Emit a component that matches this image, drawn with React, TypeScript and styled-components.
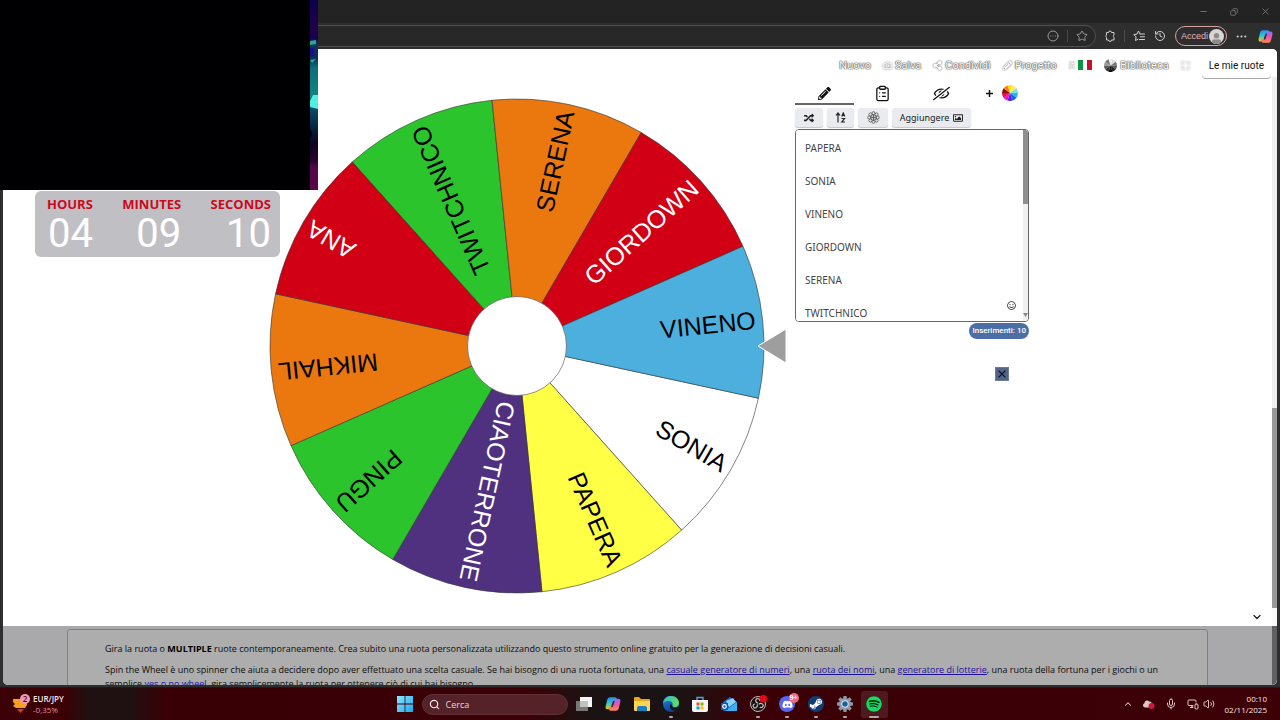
import React from 'react';
import styled, { createGlobalStyle } from 'styled-components';
import {
  FaPencilAlt, FaRegEyeSlash, FaRandom, FaRegImage, FaRegSmile, FaShareAlt,
  FaSpotify, FaDiscord, FaSteamSymbol, FaUser, FaCloud,
} from 'react-icons/fa';
import {
  Star, History, Search, Mic, Volume2, ChevronUp, ChevronDown, X, Minus,
  Copy, Ellipsis, CircleEllipsis, Camera, Maximize, ClipboardList, MonitorSmartphone,
} from 'lucide-react';

const Global = createGlobalStyle`
  *, *::before, *::after { box-sizing: border-box; }
  body { margin: 0; background: #000; font-family: Roboto, "Liberation Sans", sans-serif; }
  button { font: inherit; color: inherit; background: none; border: 0; padding: 0; margin: 0; }
  svg { display: block; flex: none; }
  p { margin: 0; }
`;

const Desktop = styled.div`
  position: relative;
  display: flex;
  flex-direction: column;
  height: 100vh;
  overflow: hidden;
`;

/* Browser window */
const BrowserWindow = styled.section`
  flex: 1;
  min-height: 0;
  display: flex;
  flex-direction: column;
  background: #2e2e2e;
  border-bottom: 1px solid #1c1c1c;
`;
const TitleBar = styled.header`
  display: flex;
  justify-content: flex-end;
  align-items: center;
  gap: 19px;
  height: 23px;
  padding-right: 9px;
  background: #232323;
  color: #8c8c8c;
`;
const IconButton = styled.button<{ $w?: number }>`
  display: inline-flex;
  align-items: center;
  justify-content: center;
  width: ${p => p.$w ?? 12}px;
`;
const Toolbar = styled.div`
  display: flex;
  align-items: center;
  height: 26px;
  padding-right: 4px;
  color: #d0d0d0;
`;
const AddressBar = styled.div`
  flex: 1;
  display: flex;
  align-items: center;
  justify-content: flex-end;
  gap: 8px;
  height: 22px;
  padding-right: 7px;
  margin-right: 8px;
  background: #282828;
  border: 1px solid #505050;
  border-radius: 11px;
  color: #9a9a9a;
`;
const AddressInput = styled.input`
  flex: 1;
  min-width: 0;
  border: 0;
  outline: 0;
  background: transparent;
  color: inherit;
`;
const Divider = styled.span`
  width: 1px;
  height: 12px;
  background: #4a4a4a;
`;
const ToolGroup = styled.div`
  display: flex;
  align-items: center;
  gap: 8px;
`;
const SignIn = styled.button`
  display: flex;
  align-items: center;
  justify-content: space-between;
  width: 52px;
  height: 20px;
  padding: 0 2px 0 5px;
  border: 1px solid #d5a2a4;
  border-radius: 10px;
  color: #f0b4b8;
  font: 9px "Liberation Sans", Arial, sans-serif;
`;
const Avatar = styled.span`
  display: flex;
  align-items: flex-end;
  justify-content: center;
  width: 15px;
  height: 15px;
  border-radius: 50%;
  overflow: hidden;
  background: #d8d6d4;
  color: #8d8b89;
`;

/* Page shown in the browser */
const Page = styled.div`
  flex: 1;
  min-height: 0;
  display: flex;
  margin: 0 3px 2px;
  border-radius: 0 5px 5px 5px;
  overflow: hidden;
  background: #fff;
`;
const Content = styled.div`
  flex: 1;
  min-width: 0;
  display: flex;
  flex-direction: column;
`;
const Nav = styled.nav`
  display: flex;
  align-items: center;
  justify-content: flex-end;
  gap: 12px;
  height: 34px;
  padding: 0 1px 2px 0;
  font-size: 11px;
`;
const NavItem = styled.a`
  display: flex;
  align-items: center;
  gap: 3px;
  color: #fff;
  text-decoration: none;
  text-shadow: 0 0 1px #444, 0 0 1px #444, 0 0 2px #777;
`;
const NavIcon = styled.span`
  svg { filter: drop-shadow(0 0 1px #444); }
`;
const Faded = styled.span`
  opacity: 0.5;
`;
const MyWheels = styled.button`
  height: 25px;
  padding: 0 7px;
  border-radius: 4px;
  color: #111;
  font-size: 10px;
  box-shadow: 0 1px 0 #aaa;
  background: #fff;
`;
const Main = styled.main`
  flex: 1;
  min-height: 0;
  display: flex;
  justify-content: center;
  gap: 8px;
  padding-left: 23px;
`;
const WheelArea = styled.div`
  width: 518px;
  padding-top: 15px;
  svg { width: 100%; height: auto; }
`;
const Panel = styled.aside`
  width: 234px;
  display: flex;
  flex-direction: column;
`;
const Tabs = styled.div`
  display: grid;
  grid-template-columns: repeat(4, 1fr);
  height: 22px;
`;
const Tab = styled.button<{ $active?: boolean }>`
  display: flex;
  align-items: center;
  justify-content: center;
  gap: 9px;
  color: #111;
  border-bottom: 2px solid ${p => (p.$active ? '#666' : 'transparent')};
`;
const AddTab = styled(Tab)`
  padding-left: 4px;
`;
const FlippedEye = styled(FaRegEyeSlash)`
  transform: scaleX(-1);
`;
const Tools = styled.div`
  display: flex;
  gap: 4px;
  padding: 3px 0 2px;
`;
const ToolButton = styled.button<{ $w: number }>`
  display: flex;
  align-items: center;
  justify-content: center;
  gap: 4px;
  width: ${p => p.$w}px;
  height: 19px;
  border-radius: 3px;
  background: #e9ebee;
  color: #222;
  font: 9px "Noto Sans", sans-serif;
  box-shadow: 0 1px 1px #c4c6c9;
`;
const EntryBox = styled.div`
  position: relative;
  display: flex;
  height: 193px;
  border: 1px solid #666;
  border-radius: 4px;
  overflow: hidden;
`;
const Entries = styled.textarea`
  flex: 1;
  min-width: 0;
  padding: 2px 9px;
  border: 0;
  outline: 0;
  resize: none;
  overflow: hidden;
  background: #fff;
  color: #444;
  font: 10px/33px "Noto Sans", sans-serif;
`;
const EntryScroll = styled.div`
  display: flex;
  flex-direction: column;
  justify-content: space-between;
  align-items: center;
  width: 5px;
  background: #f0f0f0;
  color: #888;
`;
const EntryThumb = styled.div`
  width: 5px;
  height: 74px;
  background: #8f8f8f;
`;
const Emoji = styled.button`
  position: absolute;
  right: 12px;
  bottom: 11px;
  color: #333;
`;
const Count = styled.output`
  align-self: flex-end;
  height: 16px;
  margin-top: 1px;
  padding: 0 3px;
  border-radius: 8px;
  background: #4a6ea5;
  color: #fff;
  font: 500 8px/16px Roboto, sans-serif;
`;
const Dismiss = styled.button`
  align-self: flex-end;
  display: flex;
  align-items: center;
  justify-content: center;
  width: 14px;
  height: 14px;
  margin: 28px 20px 0 0;
  border: 1px solid #6d7d98;
  background: #52648a;
  color: #0b1220;
`;
const Expand = styled.button`
  align-self: flex-end;
  margin: 0 9px 3px 0;
  color: #222;
`;
const Footer = styled.footer`
  height: 59px;
  padding: 3px 64px 0;
  overflow: hidden;
  background: #a9a9ab;
`;
const Card = styled.article`
  display: flex;
  flex-direction: column;
  gap: 7px;
  height: 90px;
  padding: 12px 38px 12px 37px;
  border: 1px solid #808080;
  border-radius: 3px;
  background: #adadad;
  color: #0c0c0c;
  font: 9px/14px "Open Sans", Roboto, sans-serif;
  a { color: #1c129c; }
`;
const Strong = styled.b`
  color: #000;
`;
const PageScroll = styled.div`
  display: flex;
  flex-direction: column;
  width: 5px;
  background: #fafafa;
`;
const Segment = styled.div<{ $color: string; $size: string }>`
  flex: ${p => p.$size};
  background: ${p => p.$color};
`;

/* Stream overlays */
const Webcam = styled.div`
  position: absolute;
  top: 0;
  left: 0;
  display: flex;
  justify-content: flex-end;
  width: 318px;
  height: 190px;
  background: #000003;
`;
const Timer = styled.div`
  position: absolute;
  top: 191px;
  left: 35px;
  display: flex;
  justify-content: space-between;
  width: 245px;
  height: 66px;
  padding: 5px 9px 0 12px;
  border-radius: 6px;
  background: #c0c0c4;
`;
const Unit = styled.div`
  text-align: right;
  color: #fff;
  font: 400 40px/44px Roboto, sans-serif;
`;
const UnitLabel = styled.div`
  color: #cc0a1c;
  font: 700 13px/16px "Open Sans", sans-serif;
`;

/* Taskbar */
const Taskbar = styled.footer`
  display: grid;
  grid-template-columns: 1fr auto 1fr;
  align-items: center;
  height: 32px;
  padding: 0 13px 0 12px;
  background: linear-gradient(90deg, #3c0006 0, #3a0006 5%, #1f1112 7%, #1f1112 10%, #380005 13%, #3a0006 41%, #1b1313 46%, #1b1313 53%, #3a0006 59%, #3c0006 100%);
  color: #f2e8e8;
  font-family: "Open Sans", sans-serif;
`;
const Widget = styled.button`
  display: flex;
  align-items: center;
  gap: 2px;
  text-align: left;
  font: 600 8px/11px "Open Sans", sans-serif;
`;
const Loss = styled.div`
  color: #e98f98;
  font-weight: 400;
`;
const Apps = styled.div`
  display: flex;
  align-items: center;
`;
const AppButton = styled.button<{ $active?: boolean; $dot?: boolean }>`
  position: relative;
  display: flex;
  align-items: center;
  justify-content: center;
  width: 27px;
  height: 27px;
  margin: 0 1px;
  border-radius: 3px;
  background: ${p => (p.$active ? 'rgba(255,255,255,0.1)' : 'transparent')};
  &::after {
    content: '';
    display: ${p => (p.$dot || p.$active ? 'block' : 'none')};
    position: absolute;
    bottom: 0;
    width: ${p => (p.$active ? 10 : 4)}px;
    height: 2px;
    border-radius: 1px;
    background: #b9a5a7;
  }
`;
const SearchBox = styled.label`
  display: flex;
  align-items: center;
  gap: 6px;
  width: 146px;
  height: 21px;
  margin: 0 2px;
  padding-left: 6px;
  border: 1px solid #613037;
  border-radius: 11px;
  background: #55222a;
`;
const SearchInput = styled.input`
  width: 100px;
  border: 0;
  outline: 0;
  padding: 0;
  background: transparent;
  font: 9px "Open Sans", sans-serif;
  &::placeholder { color: #e6d6d8; opacity: 1; }
`;
const Round = styled.span<{ $bg: string; $fg: string }>`
  display: flex;
  align-items: center;
  justify-content: center;
  width: 16px;
  height: 16px;
  border-radius: 50%;
  background: ${p => p.$bg};
  color: ${p => p.$fg};
`;
const Badge = styled.span`
  position: absolute;
  top: 2px;
  right: 2px;
  width: 10px;
  height: 10px;
  border-radius: 50%;
  background: #f0697c;
  color: #fff;
  font: 700 7px/10px "Open Sans", sans-serif;
  text-align: center;
`;
const Tray = styled.div`
  display: flex;
  align-items: center;
  justify-content: flex-end;
  gap: 10px;
  color: #dcc8ca;
`;
const TrayPair = styled.div`
  display: flex;
  gap: 4px;
`;
const Clock = styled.time`
  text-align: right;
  color: #f2e8e8;
  font: 8px/11px "Open Sans", sans-serif;
`;

const slices = [
  { name: 'SONIA', fill: '#ffffff', ink: '#000' },
  { name: 'PAPERA', fill: '#ffff45', ink: '#000' },
  { name: 'CIAOTERRONE', fill: '#50317f', ink: '#fff' },
  { name: 'PINGU', fill: '#2bc42d', ink: '#000' },
  { name: 'MIKHAIL', fill: '#eb780e', ink: '#000' },
  { name: 'ANA', fill: '#d20015', ink: '#fff' },
  { name: 'TWITCHNICO', fill: '#2bc42d', ink: '#000' },
  { name: 'SERENA', fill: '#eb780e', ink: '#000' },
  { name: 'GIORDOWN', fill: '#d20015', ink: '#fff' },
  { name: 'VINENO', fill: '#4dafdd', ink: '#000' },
];
const START = 12.2;
const STEP = 360 / slices.length;
const R = 247;
const point = (deg: number, r: number) => {
  const a = (deg * Math.PI) / 180;
  return `${(r * Math.cos(a)).toFixed(2)} ${(r * Math.sin(a)).toFixed(2)}`;
};

const Wheel = () => (
  <svg viewBox="-248 -248 518 496" role="img" aria-label="Ruota">
    {slices.map((s, i) => {
      const a = START + i * STEP;
      return (
        <path
          key={s.name}
          d={`M0 0L${point(a, R)}A${R} ${R} 0 0 1 ${point(a + STEP, R)}Z`}
          fill={s.fill}
          stroke="#333"
          strokeWidth="0.6"
        />
      );
    })}
    {slices.map((s, i) => (
      <text
        key={s.name}
        x="240"
        y="7"
        textAnchor="end"
        fontFamily="Liberation Sans, Arial, sans-serif"
        fontSize="25"
        fill={s.ink}
        transform={`rotate(${START + (i + 0.5) * STEP})`}
      >
        {s.name}
      </text>
    ))}
    <circle r="49.5" fill="#fff" stroke="#444" strokeWidth="0.6" />
    <path d="M241 0L269 -17V17Z" fill="#9e9e9e" stroke="#fff" strokeWidth="1" />
  </svg>
);

const spectrum = ['#ffe600', '#ffe96b', '#7be0e8', '#22b8f0', '#1a5df0', '#5a1fe0', '#e815c8', '#e8103a', '#8c0d12', '#ff7a1a'];
const greys = ['#eee', '#ddd', '#777', '#555', '#222', '#111', '#333', '#555', '#999', '#777'];
const MiniWheel = ({ size, colors }: { size: number; colors: string[] }) => (
  <svg width={size} height={size} viewBox="-10 -10 20 20">
    {colors.map((c, i) => (
      <path key={i} d={`M0 0L${point(i * 36 - 108, 10)}A10 10 0 0 1 ${point(i * 36 - 72, 10)}Z`} fill={c} />
    ))}
  </svg>
);

const Copilot = ({ size, id }: { size: number; id: string }) => (
  <svg width={size} height={size} viewBox="0 0 24 24">
    <defs>
      <linearGradient id={`${id}a`} x1="0" y1="0" x2="0" y2="1">
        <stop offset="0" stopColor="#2a8cf5" />
        <stop offset="0.5" stopColor="#33c6c4" />
        <stop offset="1" stopColor="#f5c518" />
      </linearGradient>
      <linearGradient id={`${id}b`} x1="0" y1="0" x2="0" y2="1">
        <stop offset="0" stopColor="#8f6cf5" />
        <stop offset="0.5" stopColor="#ec55a8" />
        <stop offset="1" stopColor="#ff8a4c" />
      </linearGradient>
    </defs>
    <path d="M8 2h7c2 0 2.500 1 3 3l.5 2h-3c-2 0-3 1-3.500 3l-2 7c-.5 2-1.500 3-3.500 3H4c-3 0-3.500-2-3-5l2-8c1-4 2-5 5-5z" fill={`url(#${id}a)`} />
    <path d="M16 22H9c-2 0-2.500-1-3-3l-.5-2h3c2 0 3-1 3.500-3l2-7c.5-2 1.500-3 3.500-3H20c3 0 3.500 2 3 5l-2 8c-1 4-2 5-5 5z" fill={`url(#${id}b)`} />
    <path d="M14.500 7l-2 7c-.5 2-1.500 3-3.500 3l.8-3.500 1.700-4.500c.5-1.400 1.500-2 3-2z" fill="#3a2140" />
  </svg>
);

const PuzzlePiece = () => (
  <svg width="12" height="12" viewBox="0 0 24 24" fill="none" stroke="currentColor" strokeWidth="2" strokeLinejoin="round">
    <path d="M5 5h4a3 3 0 0 1 6 0h5v5a3 3 0 0 0 0 5v5h-5a3 3 0 0 1-6 0H5v-5a3 3 0 0 1 0-5Z" />
  </svg>
);

const StarList = () => (
  <svg width="12" height="12" viewBox="0 0 24 24" fill="none" stroke="currentColor" strokeWidth="2" strokeLinecap="round" strokeLinejoin="round">
    <path d="M14 8l-3-6-3 6.200-6.500 1 4.700 4.700L5 21l5-2.600M14 8h9M15 13.500h8M13 19h10" />
  </svg>
);

const SortIcon = () => (
  <svg width="11" height="11" viewBox="0 0 22 22" fill="none" stroke="currentColor" strokeWidth="2.400">
    <path d="M6 21V3M2 7l4-5 4 5M13.500 9l3-7 3 7M14.500 7h4M13 13h6l-5.500 7H20" />
  </svg>
);

const FlowerGear = () => (
  <svg width="13" height="13" viewBox="-12 -12 24 24" fill="none" stroke="#555" strokeWidth="1.500">
    {Array.from({ length: 8 }, (_, i) => (
      <circle key={i} cx="0" cy="-8" r="2.800" transform={`rotate(${i * 45})`} />
    ))}
    <circle r="5" />
    <circle r="1.500" />
    <path d="M0-5V5M-5 0H5" />
  </svg>
);

const WebcamStrip = () => (
  <svg width="8" height="190" viewBox="0 0 8 190">
    <defs>
      <linearGradient id="strip" x1="0" y1="0" x2="0" y2="1">
        <stop offset="0" stopColor="#0c0050" />
        <stop offset="0.16" stopColor="#22004a" />
        <stop offset="0.2" stopColor="#150050" />
        <stop offset="0.23" stopColor="#0c3560" />
        <stop offset="0.3" stopColor="#0b2a5c" />
        <stop offset="0.36" stopColor="#0a6f7a" />
        <stop offset="0.5" stopColor="#0f8285" />
        <stop offset="0.58" stopColor="#0b4668" />
        <stop offset="0.68" stopColor="#08203c" />
        <stop offset="0.75" stopColor="#0c0620" />
        <stop offset="0.84" stopColor="#22042c" />
        <stop offset="0.88" stopColor="#52064a" />
        <stop offset="1" stopColor="#5c0648" />
      </linearGradient>
    </defs>
    <path d="M0 0H8V190H0Z" fill="url(#strip)" />
    <path d="M0 41L6 40V44L0 45ZM0 60L6 59 2 63Z" fill="#2aa88c" />
    <path d="M0 48H4V56H0Z" fill="#1c0c8c" />
    <path d="M0 101L3 95H8V109L0 107Z" fill="#4ff0e4" />
    <path d="M0 129L2 132V136L0 138Z" fill="#020208" />
  </svg>
);

const WinLogo = () => (
  <svg width="16" height="16" viewBox="0 0 16 16">
    <defs>
      <linearGradient id="win" x1="0" y1="0" x2="1" y2="1">
        <stop offset="0" stopColor="#8be6ff" />
        <stop offset="1" stopColor="#1ea7ee" />
      </linearGradient>
    </defs>
    <path d="M0 0H7.600V7.600H0ZM8.400 0H16V7.600H8.400ZM0 8.400H7.600V16H0ZM8.400 8.400H16V16H8.400Z" fill="url(#win)" />
  </svg>
);
const TaskView = () => (
  <svg width="16" height="16" viewBox="0 0 16 16">
    <path d="M0 5H12V15H0Z" fill="#777" />
    <path d="M4 1H16V11H4Z" fill="#f4f4f4" />
    <path d="M4 5H12V11H4Z" fill="#c2c2c2" />
  </svg>
);
const Folder = () => (
  <svg width="16" height="16" viewBox="0 0 16 16">
    <path d="M0 2q0-1 1-1h4l2 2h8q1 0 1 1v10H0Z" fill="#e8a81e" />
    <path d="M0 5H16V14q0 1-1 1H1q-1 0-1-1Z" fill="#ffd551" />
    <path d="M3 15v-3q0-2 2-2h6q2 0 2 2v3Z" fill="#1b7fc4" />
  </svg>
);
const Edge = () => (
  <svg width="16" height="16" viewBox="0 0 24 24">
    <defs>
      <linearGradient id="edgeA" x1="0" y1="0" x2="1" y2="0.300">
        <stop offset="0" stopColor="#2bb5ee" />
        <stop offset="1" stopColor="#63dc5a" />
      </linearGradient>
      <linearGradient id="edgeB" x1="0" y1="0" x2="0.500" y2="1">
        <stop offset="0" stopColor="#1c8ee0" />
        <stop offset="1" stopColor="#0c3f94" />
      </linearGradient>
    </defs>
    <circle cx="12" cy="12" r="12" fill="url(#edgeB)" />
    <path d="M0 12C0 5 5 0 12 0c7 0 12 5 12 10.500 0 4-3 6-6 6-3.500 0-4.500-1.500-4-2.500 1-1 1-5-3.500-6C6 7 1 8 0 12Z" fill="url(#edgeA)" />
    <path d="M14 14c-1 1.500.5 4.500 5 4 2-.2 3-1 4-1.500-1 2.500-3 4.500-5 5.500-6 0-9-5-7-9 1-1 3 0 3 1Z" fill="#1a1313" />
  </svg>
);
const Store = () => (
  <svg width="16" height="16" viewBox="0 0 16 16">
    <path d="M5 4V1.500h6V4" fill="none" stroke="#49a7e6" strokeWidth="1.400" />
    <path d="M0 4H16V14q0 2-2 2H2q-2 0-2-2Z" fill="#f5f5f5" />
    <path d="M4.500 6.500h3v3h-3z" fill="#f25022" />
    <path d="M8.500 6.500h3v3h-3z" fill="#7fba00" />
    <path d="M4.500 10.500h3v3h-3z" fill="#00a4ef" />
    <path d="M8.500 10.500h3v3h-3z" fill="#ffb900" />
  </svg>
);
const Outlook = () => (
  <svg width="16" height="16" viewBox="0 0 16 16">
    <path d="M2 6L9 1l7 5v8q0 1-1 1H3q-1 0-1-1Z" fill="#1468c7" />
    <path d="M5 5l7-3 3 4-7 5Z" fill="#8fd3fb" />
    <path d="M16 6v8q0 1-1 1H4Z" fill="#3bb0f5" />
    <path d="M0 7h7v7H0Z" fill="#0e58b5" />
    <circle cx="3.500" cy="10.500" r="1.800" fill="none" stroke="#fff" strokeWidth="1.200" />
  </svg>
);
const Obs = () => (
  <svg width="18" height="18" viewBox="-12 -12 24 24">
    <circle r="10" fill="#161214" stroke="#c9bfc0" strokeWidth="1.300" />
    {[0, 120, 240].map(a => (
      <path key={a} d="M0-1C-3-2-4-5-2-7 1-8 3-6 2-4" fill="none" stroke="#c9bfc0" strokeWidth="1.600" transform={`rotate(${a})`} />
    ))}
    <circle cx="7" cy="-7" r="5" fill="#e80812" />
  </svg>
);
const Cog = () => (
  <svg width="16" height="16" viewBox="-12 -12 24 24">
    {Array.from({ length: 8 }, (_, i) => (
      <path key={i} d="M-3-6L-2.200-12H2.200L3-6Z" fill="#8e9aa6" transform={`rotate(${i * 45})`} />
    ))}
    <circle r="9" fill="#8e9aa6" />
    <circle r="5.500" fill="#dfe8f0" />
    <circle r="4" fill="#1b5f9e" />
  </svg>
);
const Currency = () => (
  <svg width="19" height="20" viewBox="0 0 19 20">
    <path d="M1 5h11l3 3v3l-2 3H4l-3-2 2-2-2-2Z" fill="#f5a023" />
    <path d="M5 15h7l-3.500 4Z" fill="#c8451c" />
    <circle cx="13" cy="5" r="5" fill="#f598ae" />
    <text x="13" y="8" fontSize="8" textAnchor="middle" fill="#47101c" fontFamily="Open Sans, sans-serif">2</text>
  </svg>
);

export default function App() {
  return (
    <>
      <Global />
      <Desktop>
        <BrowserWindow>
          <TitleBar>
            <IconButton aria-label="Riduci"><Minus size={9} /></IconButton>
            <IconButton aria-label="Ripristina"><Copy size={8} transform="scale(-1 1)" /></IconButton>
            <IconButton aria-label="Chiudi"><X size={11} strokeWidth={1.5} /></IconButton>
          </TitleBar>
          <Toolbar>
            <AddressBar>
              <AddressInput aria-label="Indirizzo" />
              <IconButton aria-label="Altro"><CircleEllipsis size={12} /></IconButton>
              <Divider />
              <IconButton aria-label="Preferito"><Star size={12} /></IconButton>
            </AddressBar>
            <ToolGroup>
              <IconButton aria-label="Estensioni"><PuzzlePiece /></IconButton>
              <Divider />
              <IconButton aria-label="Preferiti"><StarList /></IconButton>
              <IconButton aria-label="Cronologia" $w={14}><History size={12} /></IconButton>
              <SignIn>
                Accedi
                <Avatar><FaUser size={11} /></Avatar>
              </SignIn>
              <IconButton aria-label="Impostazioni"><Ellipsis size={13} /></IconButton>
              <IconButton aria-label="Copilot" $w={21}><Copilot size={15} id="ca" /></IconButton>
            </ToolGroup>
          </Toolbar>
          <Page>
            <Content>
              <Nav>
                <NavItem href="#">Nuovo</NavItem>
                <NavItem href="#"><NavIcon><Camera size={9} /></NavIcon>Salva</NavItem>
                <NavItem href="#"><NavIcon><FaShareAlt size={9} /></NavIcon>Condividi</NavItem>
                <NavItem href="#"><NavIcon><FaPencilAlt size={9} /></NavIcon>Progetto</NavItem>
                <NavItem href="#">
                  <Faded>it</Faded>
                  <svg width="14" height="10" viewBox="0 0 14 10">
                    <path d="M0 0H5V10H0Z" fill="#0b9444" />
                    <path d="M5 0H9V10H5Z" fill="#fff" />
                    <path d="M9 0H14V10H9Z" fill="#c4122e" />
                  </svg>
                </NavItem>
                <NavItem href="#"><MiniWheel size={13} colors={greys} />Biblioteca</NavItem>
                <NavItem href="#" aria-label="Schermo intero"><NavIcon><Maximize size={9} /></NavIcon></NavItem>
                <MyWheels>Le mie ruote</MyWheels>
              </Nav>
              <Main>
                <WheelArea><Wheel /></WheelArea>
                <Panel>
                  <Tabs>
                    <Tab $active aria-label="Modifica"><FaPencilAlt size={13} /></Tab>
                    <Tab aria-label="Risultati"><ClipboardList size={17} strokeWidth={1.8} /></Tab>
                    <Tab aria-label="Nascondi"><FlippedEye size={17} /></Tab>
                    <AddTab aria-label="Aggiungi ruota">
                      <svg width="7" height="7" viewBox="0 0 7 7" stroke="#111" strokeWidth="1.500"><path d="M0 3.500H7M3.500 0V7" /></svg>
                      <MiniWheel size={16} colors={spectrum} />
                    </AddTab>
                  </Tabs>
                  <Tools>
                    <ToolButton $w={28} aria-label="Mescola"><FaRandom size={10} /></ToolButton>
                    <ToolButton $w={27} aria-label="Ordina"><SortIcon /></ToolButton>
                    <ToolButton $w={30} aria-label="Opzioni"><FlowerGear /></ToolButton>
                    <ToolButton $w={79}>Aggiungere <FaRegImage size={10} /></ToolButton>
                  </Tools>
                  <EntryBox>
                    <Entries
                      aria-label="Voci della ruota"
                      spellCheck={false}
                      defaultValue={'PAPERA\nSONIA\nVINENO\nGIORDOWN\nSERENA\nTWITCHNICO'}
                    />
                    <EntryScroll>
                      <EntryThumb />
                      <svg width="5" height="8" viewBox="0 0 5 8" fill="currentColor"><path d="M0 0H5L2.500 4Z" /></svg>
                    </EntryScroll>
                    <Emoji aria-label="Emoji"><FaRegSmile size={9} /></Emoji>
                  </EntryBox>
                  <Count>Inserimenti: 10</Count>
                  <Dismiss aria-label="Chiudi annuncio"><X size={12} strokeWidth={2.2} /></Dismiss>
                </Panel>
              </Main>
              <Expand aria-label="Espandi"><ChevronDown size={12} strokeWidth={2.5} /></Expand>
              <Footer>
                <Card>
                  <p>
                    Gira la ruota o <Strong>MULTIPLE</Strong> ruote contemporaneamente. Crea subito una ruota personalizzata
                    utilizzando questo strumento online gratuito per la generazione di decisioni casuali.
                  </p>
                  <p>
                    Spin the Wheel è uno spinner che aiuta a decidere dopo aver effettuato una scelta casuale. Se hai bisogno
                    di una ruota fortunata, una <a href="#">casuale generatore di numeri</a>, una <a href="#">ruota dei nomi</a>,
                    una <a href="#">generatore di lotterie</a>, una ruota della fortuna per i giochi o un semplice{' '}
                    <a href="#">yes o no wheel</a>, gira semplicemente la ruota per ottenere ciò di cui hai bisogno.
                  </p>
                </Card>
              </Footer>
            </Content>
            <PageScroll>
              <Segment $color="#fff" $size="0 0 28px" />
              <Segment $color="#eeeeee" $size="331 1 0" />
              <Segment $color="#999999" $size="200 1 0" />
              <Segment $color="#fafafa" $size="0 0 18px" />
              <Segment $color="#606062" $size="0 0 59px" />
            </PageScroll>
          </Page>
        </BrowserWindow>

        <Taskbar>
          <Widget>
            <Currency />
            <div>
              EUR/JPY
              <Loss>-0,35%</Loss>
            </div>
          </Widget>
          <Apps>
            <AppButton aria-label="Start"><WinLogo /></AppButton>
            <SearchBox>
              <Search size={11} strokeWidth={2.5} />
              <SearchInput placeholder="Cerca" aria-label="Cerca" />
            </SearchBox>
            <AppButton aria-label="Visualizzazione attività"><TaskView /></AppButton>
            <AppButton aria-label="Copilot"><Copilot size={16} id="cb" /></AppButton>
            <AppButton aria-label="Esplora file"><Folder /></AppButton>
            <AppButton aria-label="Edge" $dot><Edge /></AppButton>
            <AppButton aria-label="Store"><Store /></AppButton>
            <AppButton aria-label="Outlook"><Outlook /></AppButton>
            <AppButton aria-label="OBS" $dot><Obs /></AppButton>
            <AppButton aria-label="Discord" $dot>
              <Round $bg="#5865f2" $fg="#fff"><FaDiscord size={11} /></Round>
              <Badge>9+</Badge>
            </AppButton>
            <AppButton aria-label="Steam" $dot><Round $bg="#0f3d73" $fg="#fff"><FaSteamSymbol size={14} /></Round></AppButton>
            <AppButton aria-label="Impostazioni" $dot><Cog /></AppButton>
            <AppButton aria-label="Spotify" $active><Round $bg="#0c1a10" $fg="#1ed760"><FaSpotify size={16} /></Round></AppButton>
          </Apps>
          <Tray>
            <ChevronUp size={10} strokeWidth={2.5} />
            <svg width="12" height="10" viewBox="0 0 12 10">
              <FaCloud size={10} />
              <circle cx="8.500" cy="7" r="3" fill="#d01640" />
            </svg>
            <Mic size={12} />
            <TrayPair><MonitorSmartphone size={12} /><Volume2 size={12} /></TrayPair>
            <Clock>00:10<br />02/11/2025</Clock>
          </Tray>
        </Taskbar>

        <Webcam><WebcamStrip /></Webcam>
        <Timer>
          <Unit><UnitLabel>HOURS</UnitLabel>04</Unit>
          <Unit><UnitLabel>MINUTES</UnitLabel>09</Unit>
          <Unit><UnitLabel>SECONDS</UnitLabel>10</Unit>
        </Timer>
      </Desktop>
    </>
  );
}
